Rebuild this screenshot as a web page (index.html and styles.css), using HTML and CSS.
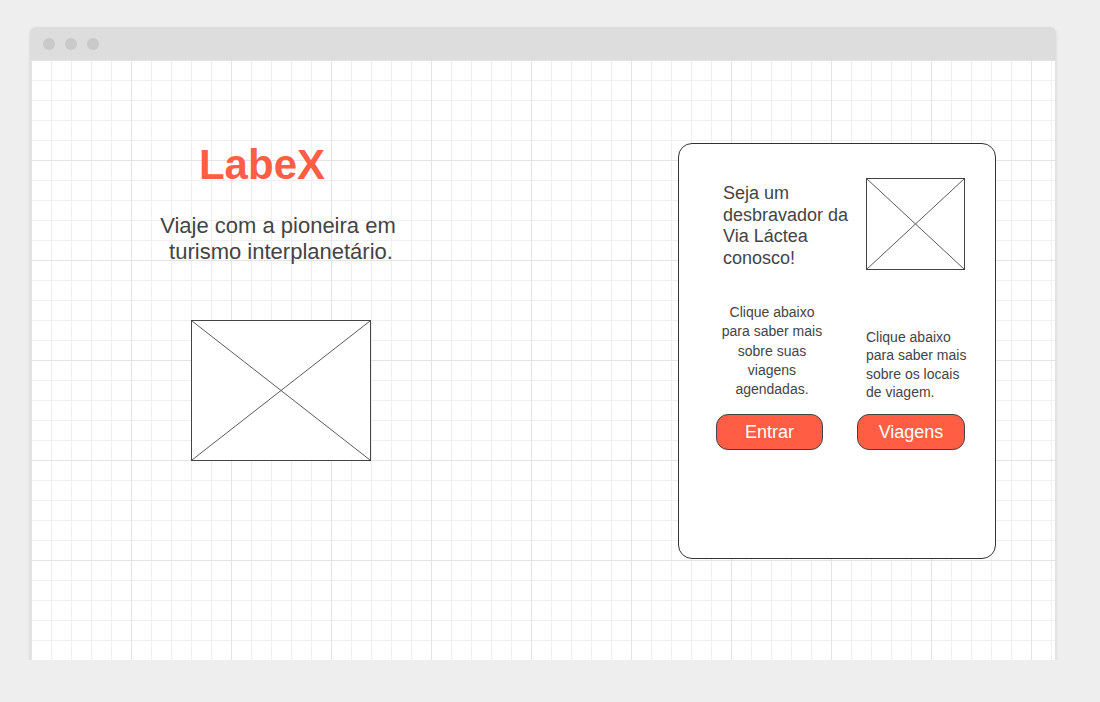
FILE: index.html
```html
<!DOCTYPE html>
<html lang="pt-BR">
<head>
<meta charset="utf-8">
<title>LabeX</title>
<link rel="stylesheet" href="styles.css">
</head>
<body>
<div class="window">
  <div class="titlebar">
    <span class="dot"></span><span class="dot"></span><span class="dot"></span>
  </div>
  <div class="canvas">
    <section class="intro">
      <h1 class="brand">LabeX</h1>
      <p class="tagline">Viaje com a pioneira em&nbsp;<br>turismo interplanetário.</p>
      <div class="placeholder placeholder-lg">
        <svg class="cross" viewBox="0 0 100 100" preserveAspectRatio="none">
          <line x1="0" y1="0" x2="100" y2="100" vector-effect="non-scaling-stroke"/>
          <line x1="100" y1="0" x2="0" y2="100" vector-effect="non-scaling-stroke"/>
        </svg>
      </div>
    </section>
    <section class="card">
      <div class="card-top">
        <p class="card-lead">Seja um<br>desbravador da<br>Via Láctea<br>conosco!</p>
        <div class="placeholder placeholder-sm">
          <svg class="cross" viewBox="0 0 100 100" preserveAspectRatio="none">
            <line x1="0" y1="0" x2="100" y2="100" vector-effect="non-scaling-stroke"/>
            <line x1="100" y1="0" x2="0" y2="100" vector-effect="non-scaling-stroke"/>
          </svg>
        </div>
      </div>
      <div class="card-actions">
        <div class="action action-left">
          <p class="action-text">Clique abaixo<br>para saber mais<br>sobre suas<br>viagens<br>agendadas.</p>
          <button class="btn btn-enter">Entrar</button>
        </div>
        <div class="action action-right">
          <p class="action-text">Clique abaixo<br>para saber mais<br>sobre os locais<br>de viagem.</p>
          <button class="btn btn-trips">Viagens</button>
        </div>
      </div>
    </section>
  </div>
</div>
</body>
</html>
```

FILE: styles.css
```css
* { box-sizing: border-box; }

html, body {
  margin: 0;
  padding: 0;
  background: #eeeeee;
  font-family: "Liberation Sans", Arial, sans-serif;
  color: #444444;
}

.window {
  margin: 27px 0 0 30px;
  width: 1026px;
  border-radius: 6px 6px 0 0;
  box-shadow: 0 1px 3px rgba(0, 0, 0, 0.12);
  overflow: hidden;
}

.titlebar {
  height: 33px;
  background: #dddddd;
  display: flex;
  align-items: center;
  gap: 10px;
  padding-left: 13px;
}

.dot {
  width: 12px;
  height: 12px;
  border-radius: 50%;
  background: #c9c9c9;
}

.canvas {
  height: 600px;
  border-left: 1px solid #e2e2e2;
  border-right: 1px solid #e2e2e2;
  background-color: #ffffff;
  background-image:
    linear-gradient(to right, #e3e3e3 1px, transparent 1px),
    linear-gradient(to bottom, #e3e3e3 1px, transparent 1px),
    linear-gradient(to right, #efefef 1px, transparent 1px),
    linear-gradient(to bottom, #efefef 1px, transparent 1px);
  background-size: 100px 100px, 100px 100px, 20px 20px, 20px 20px;
  display: flex;
  align-items: flex-start;
  padding-left: 100px;
}

.intro {
  width: 300px;
  margin-top: 81px;
  display: flex;
  flex-direction: column;
  align-items: center;
}

.brand {
  margin: 0;
  width: 100%;
  padding-right: 38px;
  text-align: center;
  font-size: 42px;
  line-height: 48px;
  font-weight: bold;
  color: #ff5e45;
}

.tagline {
  margin: 24px 0 0;
  width: 100%;
  text-align: center;
  font-size: 22px;
  line-height: 26.4px;
  color: #444444;
}

.placeholder {
  border: 1px solid #444444;
  background: #ffffff;
  flex: none;
}

.placeholder-lg {
  width: 180px;
  height: 141px;
  margin-top: 54px;
}

.placeholder-sm {
  width: 99px;
  height: 92px;
}

.cross {
  display: block;
  width: 100%;
  height: 100%;
}

.cross line {
  stroke: #5a5a5a;
  stroke-width: 1;
}

.card {
  margin-left: 247px;
  margin-top: 83px;
  width: 318px;
  height: 416px;
  border: 1px solid #333333;
  border-radius: 14px;
  background: #ffffff;
  padding-top: 34px;
}

.card-top {
  display: flex;
  align-items: flex-start;
  padding-left: 44px;
}

.card-lead {
  margin: 5px 0 0;
  flex: 0 0 143px;
  font-size: 18px;
  line-height: 21.7px;
  color: #444444;
}

.card-actions {
  margin-top: 33px;
  display: flex;
  align-items: flex-end;
  padding-left: 37px;
  gap: 29px;
}

.action {
  display: flex;
  flex-direction: column;
}

.action-left {
  width: 112px;
}

.action-left .action-text {
  text-align: center;
  line-height: 19.25px;
  margin: 0 0 15px;
}

.action-right .action-text {
  padding-left: 9px;
  line-height: 18.3px;
  margin: 0 0 13px;
}

.action-text {
  font-size: 14px;
  color: #444444;
}

.btn {
  height: 36px;
  border: 1px solid #444444;
  border-radius: 12px;
  background: #ff5e45;
  color: #ffffff;
  font-family: "Liberation Sans", Arial, sans-serif;
  font-size: 18px;
  padding: 0;
  cursor: pointer;
}

.btn-enter { width: 107px; }
.btn-trips { width: 108px; }
```
